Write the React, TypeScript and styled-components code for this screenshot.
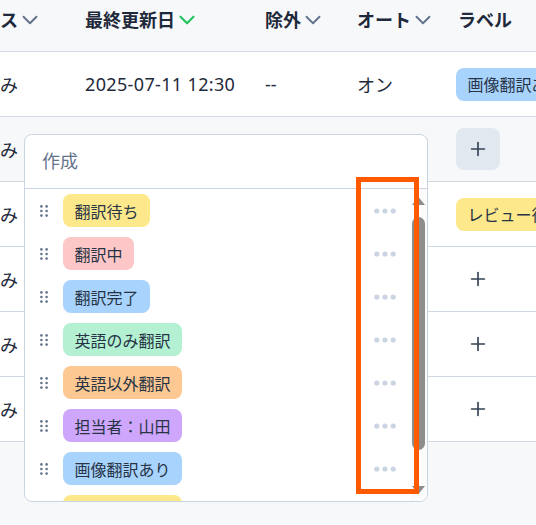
import * as React from "react"
import styled, { createGlobalStyle, css } from "styled-components"
import { ChevronDown, Plus } from "lucide-react"

const GlobalStyle = createGlobalStyle`
  html, body {
    margin: 0;
    padding: 0;
    background: #f7f8fa;
    font-family: "Noto Sans", "Noto Sans CJK JP", sans-serif;
    color: #1e293b;
    overflow: hidden;
  }
  * { box-sizing: border-box; }
`

const Page = styled.div`
  position: relative;
  width: 536px;
  height: 525px;
  overflow: hidden;
`

const Table = styled.div`
  width: 680px;
  display: flex;
  flex-direction: column;
`

const cols = "85px 180px 92px 99px 224px"

const HeaderRow = styled.div`
  display: grid;
  grid-template-columns: ${cols};
  height: 52px;
  background: #f7f8fa;
  border-bottom: 1px solid #cfd8e3;
`

const HeaderCell = styled.div`
  display: flex;
  align-items: flex-start;
  padding-top: 7px;
  font-size: 18px;
  font-weight: 700;
  line-height: 26px;
  white-space: nowrap;
  overflow: hidden;
`

const SortIcon = styled(ChevronDown)<{ $active?: boolean }>`
  flex: none;
  color: ${p => (p.$active ? "#22c55e" : "#64748b")};
  margin-left: -1px;
`

const Row = styled.div<{ $hover?: boolean }>`
  display: grid;
  grid-template-columns: ${cols};
  height: 65px;
  background: ${p => (p.$hover ? "#f7f8fa" : "#ffffff")};
  border-bottom: 1px solid #cfd8e3;
`

const Cell = styled.div<{ $wide?: boolean }>`
  display: flex;
  align-items: center;
  font-size: 18px;
  white-space: nowrap;
  overflow: hidden;
  letter-spacing: ${p => (p.$wide ? "0.35px" : "0")};
`

const Badge = styled.span<{ $bg: string }>`
  display: inline-flex;
  align-items: center;
  height: 33px;
  padding: 0 11.5px;
  border-radius: 8px;
  background: ${p => p.$bg};
  color: #273445;
  font-size: 16px;
  letter-spacing: 0;
  white-space: nowrap;
  flex: none;
`

const AddButton = styled.button<{ $active?: boolean }>`
  width: 44px;
  height: 42px;
  border: none;
  border-radius: 8px;
  display: flex;
  align-items: center;
  justify-content: center;
  color: #334155;
  padding: 0;
  background: transparent;
  ${p =>
    p.$active &&
    css`
      background: #e2e8f0;
    `}
`

const Popover = styled.div`
  position: absolute;
  left: 24px;
  top: 134px;
  width: 404px;
  height: 368px;
  background: #ffffff;
  border: 1px solid #cbd5e1;
  border-radius: 8px;
  display: flex;
  flex-direction: column;
  overflow: hidden;
`

const PopoverHeader = styled.div`
  height: 54px;
  flex: none;
  display: flex;
  align-items: center;
  padding-left: 17px;
  padding-bottom: 3px;
  font-size: 18px;
  color: #64748b;
  border-bottom: 1px solid #cbd5e1;
`

const PopoverBody = styled.div`
  flex: 1;
  min-height: 0;
  display: flex;
`

const LabelList = styled.div`
  flex: 1;
  overflow: hidden;
`

const LabelItem = styled.div`
  height: 43px;
  display: flex;
  align-items: center;
  padding: 0 15px;
  gap: 15px;
`

const Spacer = styled.div`
  flex: auto;
`

/* scrollbar drawn by hand: headless chrome hides the native one */
const ScrollBar = styled.div`
  width: 16px;
  flex: none;
  background: #fbfbfb;
  display: flex;
  flex-direction: column;
  align-items: flex-start;
  padding: 7px 0 6px;
`

const ScrollThumb = styled.div`
  width: 13px;
  margin: 11px 0 0 1px;
  height: 233px;
  border-radius: 7px;
  background: #8d8d8d;
`

const Arrow = styled.svg`
  flex: none;
  display: block;
`

const Highlight = styled.div`
  position: absolute;
  left: 356px;
  top: 177px;
  width: 63px;
  height: 317px;
  border: 5px solid #ff5a00;
  pointer-events: none;
`

const Grip = () => (
  <svg width="8" height="12" viewBox="0 0 8 12" style={{ flex: "none" }}>
    {[1.4, 6, 10.6].map(y =>
      [1.4, 6.6].map(x => <circle key={`${x}-${y}`} cx={x} cy={y} r="1.3" fill="#64748b" />)
    )}
  </svg>
)

const MoreDots = () => (
  <svg width="22" height="6" viewBox="0 0 22 6" style={{ flex: "none" }}>
    {[2.8, 11, 19.2].map(x => (
      <circle key={x} cx={x} cy="3" r="2.6" fill="#cbd5e1" />
    ))}
  </svg>
)

const colors = {
  yellow: "#fde88c",
  pink: "#fec7c7",
  blue: "#a8d3fd",
  green: "#b4f1d3",
  orange: "#fdc892",
  purple: "#cea6fb"
}

const labels = [
  { name: "翻訳待ち", bg: colors.yellow },
  { name: "翻訳中", bg: colors.pink },
  { name: "翻訳完了", bg: colors.blue },
  { name: "英語のみ翻訳", bg: colors.green },
  { name: "英語以外翻訳", bg: colors.orange },
  { name: "担当者：山田", bg: colors.purple },
  { name: "画像翻訳あり", bg: colors.blue },
  { name: "レビュー待ち", bg: colors.yellow }
]

type RowData = {
  date: string
  label?: { name: string; bg: string }
  hover?: boolean
}

const rows: RowData[] = [
  { date: "2025-07-11 12:30", label: { name: "画像翻訳あり", bg: colors.blue } },
  { date: "2025-07-11 12:30", hover: true },
  { date: "2025-07-10 18:05", label: { name: "レビュー待ち", bg: colors.yellow } },
  { date: "2025-07-10 09:12" },
  { date: "2025-07-09 16:44" },
  { date: "2025-07-08 11:20" }
]

export default function App() {
  return (
    <Page>
      <GlobalStyle />
      <Table>
        <HeaderRow>
          <HeaderCell>
            ス<SortIcon size={26} strokeWidth={1.8} />
          </HeaderCell>
          <HeaderCell>
            最終更新日<SortIcon size={26} strokeWidth={2} $active />
          </HeaderCell>
          <HeaderCell>
            除外<SortIcon size={26} strokeWidth={1.8} />
          </HeaderCell>
          <HeaderCell>
            オート<SortIcon size={26} strokeWidth={1.8} />
          </HeaderCell>
          <HeaderCell style={{ paddingLeft: 2 }}>ラベル</HeaderCell>
        </HeaderRow>
        {rows.map((r, i) => (
          <Row key={i} $hover={r.hover}>
            <Cell>み</Cell>
            <Cell $wide>{r.date}</Cell>
            <Cell>--</Cell>
            <Cell>オン</Cell>
            <Cell>
              {r.label ? (
                <Badge $bg={r.label.bg}>{r.label.name}</Badge>
              ) : (
                <AddButton $active={r.hover}>
                  <Plus size={22} strokeWidth={1.8} />
                </AddButton>
              )}
            </Cell>
          </Row>
        ))}
      </Table>

      <Popover>
        <PopoverHeader>作成</PopoverHeader>
        <PopoverBody>
          <LabelList>
            {labels.map(l => (
              <LabelItem key={l.name}>
                <Grip />
                <Badge $bg={l.bg}>{l.name}</Badge>
                <Spacer />
                <MoreDots />
              </LabelItem>
            ))}
          </LabelList>
          <ScrollBar>
            <Arrow width="15" height="10" viewBox="0 0 15 10">
              <path d="M7.5 1 L14 9 L1 9 Z" fill="#8d8d8d" />
            </Arrow>
            <ScrollThumb />
            <Spacer />
            <Arrow width="15" height="10" viewBox="0 0 15 10">
              <path d="M1 1 L14 1 L7.5 9 Z" fill="#8d8d8d" />
            </Arrow>
          </ScrollBar>
        </PopoverBody>
      </Popover>
      <Highlight />
    </Page>
  )
}
